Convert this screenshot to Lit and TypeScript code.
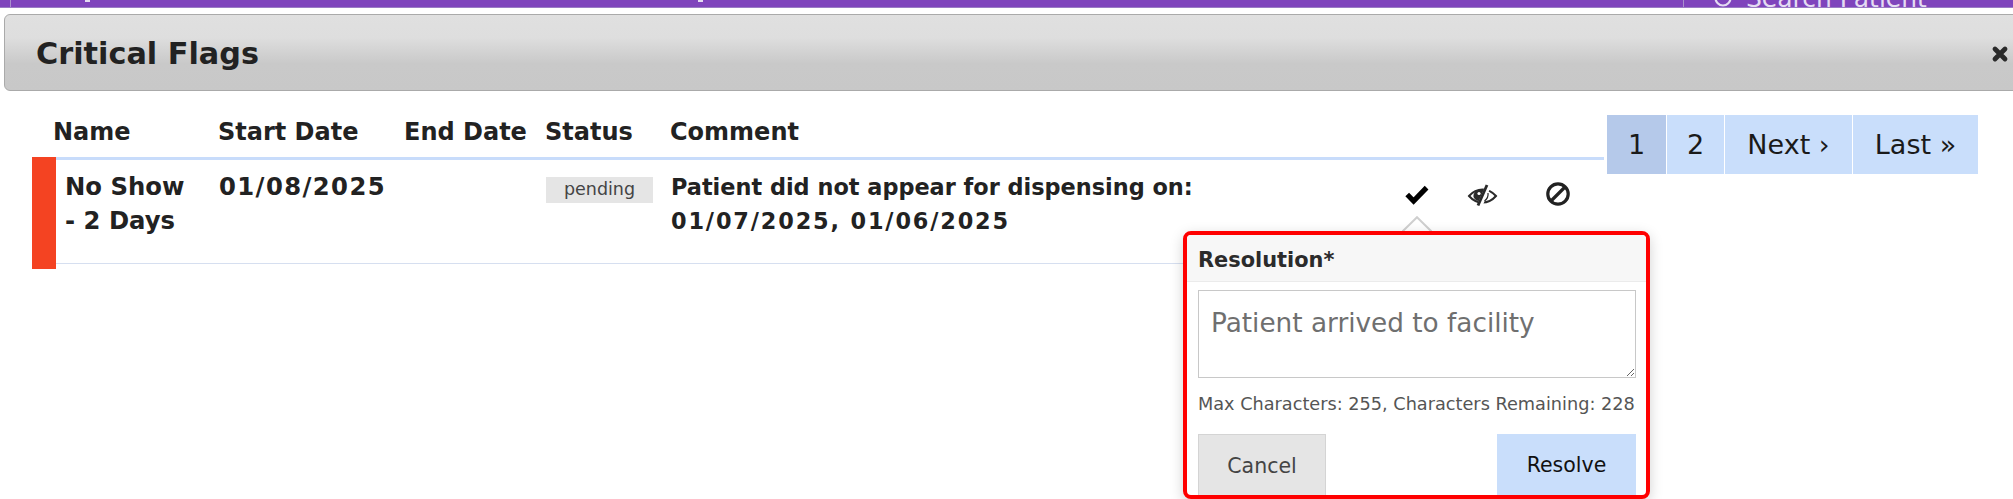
import { LitElement, html, css } from "lit";
import { customElement } from "lit/decorators.js";

@customElement("app-root")
export class AppRoot extends LitElement {
  static styles = css`
    :host {
      display: block;
      position: relative;
      width: 2013px;
      height: 499px;
      overflow: hidden;
      background: #fff;
      font-family: "DejaVu Sans", Verdana, sans-serif;
      color: #222;
    }
    .topbar {
      height: 7px;
      background: #7f44bc;
      border-bottom: 1px solid #9a7cc4;
      overflow: hidden;
      display: flex;
      justify-content: space-between;
      margin-bottom: 6px;
      position: relative;
    }
    .tick { margin-left: 10px; width: 1px; background: #a98fcc; }
    .speck { position: absolute; top: 0; width: 5px; height: 2px; background: #e4dcf2; }
    .s1 { left: 85px; }
    .s2 { left: 698px; }
    .search {
      width: 330px;
      box-sizing: border-box;
      height: 7px;
      border-left: 1px solid #a98fcc;
      padding-left: 30px;
      display: flex;
      align-items: flex-end;
      color: #e4dcf2;
      font-size: 25px;
      line-height: 7px;
      gap: 13px;
      white-space: nowrap;
    }
    .search span { position: relative; top: -5px; }
    .search svg { flex: none; }
    .head {
      margin: 0 -10px 0 4px;
      height: 77px;
      box-sizing: border-box;
      border: 1px solid #aaa;
      border-radius: 6px;
      background: linear-gradient(#e0e0e0 0, #dedede 30%, #c9c9c9 65%, #c8c8c8 100%);
      display: flex;
      align-items: center;
      padding: 2px 0 0 31px;
      font-size: 30.3px;
      font-weight: 700;
      color: #222;
    }
    .close {
      position: absolute;
      left: 1991px;
      top: 45px;
      width: 18px;
      height: 18px;
    }
    .content {
      display: flex;
      align-items: flex-start;
      padding: 24px 0 0 32px;
    }
    .table { width: 1572px; flex: none; }
    .thead {
      display: grid;
      grid-template-columns: 165px 186px 141px 125px 1fr;
      padding-left: 21px;
      height: 42px;
      box-sizing: border-box;
      font-size: 24px;
      font-weight: 700;
      line-height: 35px;
      white-space: nowrap;
    }
    .row { display: flex; height: 112px; }
    .flag { width: 24px; flex: none; background: #f44322; }
    .rowbody {
      flex: 1;
      border-top: 3px solid #c8dcfb;
    }
    .cells {
      display: grid;
      grid-template-columns: 163px 186px 141px 125px 1fr;
      height: 104px;
      box-sizing: border-box;
      border-bottom: 1px solid #d6dff0;
      font-size: 24.3px;
      font-weight: 700;
      line-height: 34px;
      padding-top: 10px;
    }
    .name { padding: 0 20px 0 9px; }
    .start { letter-spacing: 1.4px; white-space: nowrap; }
    .pill {
      display: block;
      background: #e5e5e5;
      width: 107px;
      height: 26px;
      line-height: 24px;
      text-align: center;
      font-size: 17.5px;
      font-weight: 400;
      color: #444;
      margin-top: 7px;
    }
    .comment { white-space: nowrap; font-size: 22.4px; }
    .dates { letter-spacing: 1.85px; }
    .pager { display: flex; gap: 1px; margin-left: 3px; }
    .pg {
      height: 59px;
      line-height: 60px;
      background: #c9defb;
      font-size: 27px;
      text-align: center;
      color: #1a1a1a;
    }
    .pg.on { background: #b5c9ea; }
    .w59 { width: 59px; }
    .w57 { width: 57px; }
    .w127 { width: 127px; }
    .w125 { width: 125px; }
    .ic { position: absolute; display: block; }
    .arrow {
      position: absolute;
      left: 1402px;
      top: 216px;
      width: 30px;
      height: 16px;
      overflow: hidden;
    }
    .pop {
      position: absolute;
      left: 1183px;
      top: 231px;
      width: 467px;
      height: 268px;
      box-sizing: border-box;
      border: 4px solid #ff0000;
      border-radius: 8px;
      background: #fff;
      box-shadow: 0 4px 14px rgba(0,0,0,.18);
      overflow: hidden;
      display: flex;
      flex-direction: column;
    }
    .pop-h {
      height: 47px;
      flex: none;
      box-sizing: border-box;
      background: #f7f7f7;
      border-bottom: 1px solid #ebebeb;
      padding-left: 11px;
      font-size: 20.9px;
      font-weight: 700;
      line-height: 51px;
      color: #2b2b2b;
    }
    .pop-b {
      padding: 8px 10px 0 11px;
      flex: 1;
      display: flex;
      flex-direction: column;
      min-height: 0;
    }
    textarea {
      display: block;
      width: 100%;
      height: 88px;
      box-sizing: border-box;
      border: 1px solid #c8c8c8;
      padding: 17px 12px;
      margin: 0;
      outline: none;
      font-family: inherit;
      font-size: 26.3px;
      line-height: 30px;
      color: #6f6f6f;
      border-radius: 0;
      flex: none;
    }
    .count {
      font-size: 17.7px;
      color: #555;
      margin-top: 13px;
      line-height: 26px;
      white-space: nowrap;
    }
    .btns {
      display: flex;
      justify-content: space-between;
      margin-top: 17px;
    }
    .btn {
      font-size: 20.5px;
      text-align: center;
      line-height: 62px;
      box-sizing: border-box;
      height: 70px;
    }
    .cancel {
      width: 128px;
      background: #e5e5e5;
      border: 1px solid #d4d4d4;
      color: #444;
    }
    .resolve {
      width: 139px;
      background: #c9defb;
      color: #111;
    }
  `;

  render() {
    return html`
      <div class="topbar">
        <div class="tick"></div>
        <i class="speck s1"></i><i class="speck s2"></i>
        <div class="search">
          <svg width="19" height="7" viewBox="0 0 19 7"><circle cx="9" cy="-2" r="7.5" fill="none" stroke="#e4dcf2" stroke-width="2.2"/></svg>
          <span>Search Patient</span>
        </div>
      </div>
      <div class="head">Critical Flags</div>
      <svg class="close" viewBox="0 0 18 18">
        <path d="M4 4 L14 14 M14 4 L4 14" stroke="#2a2a2a" stroke-width="4.8" stroke-linecap="round"/>
      </svg>
      <div class="content">
        <div class="table">
          <div class="thead">
            <div>Name</div><div>Start Date</div><div>End Date</div><div>Status</div><div>Comment</div>
          </div>
          <div class="row">
            <div class="flag"></div>
            <div class="rowbody">
              <div class="cells">
                <div class="name">No Show - 2 Days</div>
                <div class="start">01/08/2025</div>
                <div></div>
                <div><span class="pill">pending</span></div>
                <div class="comment">Patient did not appear for dispensing on:<br /><span class="dates">01/07/2025, 01/06/2025</span></div>
              </div>
            </div>
          </div>
        </div>
        <div class="pager">
          <div class="pg on w59">1</div>
          <div class="pg w57">2</div>
          <div class="pg w127">Next ›</div>
          <div class="pg w125">Last »</div>
        </div>
      </div>

      <svg class="ic" style="left:1404px;top:184px" width="26" height="21" viewBox="0 0 26 21">
        <path d="M3.2 10.5 L9.6 17 L22.6 3.6" fill="none" stroke="#000" stroke-width="5.2"/>
      </svg>
      <svg class="ic" style="left:1467px;top:184px" width="31" height="23" viewBox="0 0 31 23">
        <path d="M2 12 C6 7.5 10 5.5 15.5 5.5 C21 5.5 25 7.5 29 12 C25 16.5 21 18.5 15.5 18.5 C10 18.5 6 16.5 2 12 Z" fill="none" stroke="#2a2a2a" stroke-width="2"/>
        <path d="M13 6 C8 6.5 6 9.5 6.5 13 C8 16 10.5 17 12 17 L17 6 Z" fill="#2a2a2a"/>
        <circle cx="12" cy="9.5" r="1.6" fill="#fff"/>
        <path d="M21.5 1.5 L12.5 22" stroke="#fff" stroke-width="5.4"/>
        <path d="M20 1 L11 21.5" stroke="#2a2a2a" stroke-width="2.8"/>
        <path d="M21 9 C21.5 12 20 15 17.5 17" fill="none" stroke="#2a2a2a" stroke-width="1.2"/>
      </svg>
      <svg class="ic" style="left:1544px;top:180px" width="28" height="28" viewBox="0 0 28 28">
        <circle cx="14" cy="14" r="10.2" fill="none" stroke="#222" stroke-width="3.2"/>
        <path d="M7 21 L21 7" stroke="#222" stroke-width="3.2"/>
      </svg>

      <svg class="arrow" viewBox="0 0 30 16">
        <path d="M0 16 L15 1.2 L30 16" fill="#fff" stroke="#cfcfcf" stroke-width="2"/>
      </svg>
      <div class="pop">
        <div class="pop-h">Resolution*</div>
        <div class="pop-b">
          <textarea .value=${"Patient arrived to facility"}></textarea>
          <div class="count">Max Characters: 255, Characters Remaining: 228</div>
          <div class="btns">
            <div class="btn cancel">Cancel</div>
            <div class="btn resolve">Resolve</div>
          </div>
        </div>
      </div>
    `;
  }
}
